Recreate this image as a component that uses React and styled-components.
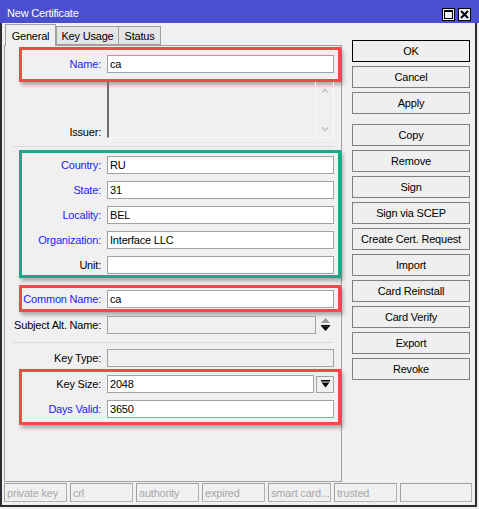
import React from "react";
import styled, { createGlobalStyle } from "styled-components";

const Global = createGlobalStyle`
  html, body { margin: 0; padding: 0; background: #f0f0f0; }
  body { font-family: "Liberation Sans", Arial, sans-serif; font-size: 11px; color: #000; letter-spacing: -0.2px; }
  * { box-sizing: border-box; }
`;

const Window = styled.div`
  width: 479px;
  height: 509px;
  display: flex;
  flex-direction: column;
`;

const TitleBar = styled.div`
  height: 23px;
  background: #4b4fcf;
  color: #fff;
  display: flex;
  align-items: center;
  padding: 0 8px 0 7px;
`;

const Title = styled.div`
  flex: 1;
  font-size: 11px;
  padding-top: 3px;
`;

const TitleButtons = styled.div`
  display: flex;
  gap: 3px;
  align-self: flex-start;
  margin-top: 8px;
`;

const TitleButton = styled.div`
  width: 13px;
  height: 13px;
  border: 1px solid #000;
  background: #f0f0f0;
  display: flex;
  align-items: center;
  justify-content: center;
`;

const Frame = styled.div`
  width: 477px;
  height: 484px;
  border: 2px solid #2e2e2e;
  border-top: none;
  display: flex;
  flex-direction: column;
`;

const Main = styled.div`
  flex: 1;
  display: flex;
`;

const LeftCol = styled.div`
  margin-left: 2px;
  width: 338px;
  display: flex;
  flex-direction: column;
`;

const TabStrip = styled.div`
  height: 21px;
  margin-top: 1px;
  display: flex;
  align-items: flex-end;
  padding-left: 1px;
`;

const Tab = styled.div`
  position: relative;
  z-index: 1;
  width: ${(p) => p.$w}px;
  height: ${(p) => (p.$active ? 22 : 19)}px;
  margin-bottom: ${(p) => (p.$active ? -1 : 0)}px;
  background: ${(p) => (p.$active ? "#f0f0f0" : "#e4e4e4")};
  border: 1px solid #a0a0a0;
  border-bottom: ${(p) => (p.$active ? "none" : "1px solid #a0a0a0")};
  margin-left: ${(p) => p.$ml || 0}px;
  display: flex;
  align-items: center;
  justify-content: center;
  padding-top: ${(p) => (p.$active ? 0 : 1)}px;
  font-size: 11px;
`;

const Panel = styled.div`
  flex: 1;
  border: 1px solid #a0a0a0;
  padding-right: 7px;
  display: flex;
  flex-direction: column;
`;

const Highlight = styled.div`
  margin-top: ${(p) => p.$mt}px;
  margin-left: 14px;
  margin-right: -7px;
  border: 3px solid ${(p) => p.$color};
  box-shadow: 2px 3px 4px rgba(0, 0, 0, 0.3);
  padding: ${(p) => p.$pad};
  padding-right: 4px;
  display: flex;
  flex-direction: column;
  gap: 7px;
`;

const Row = styled.div`
  display: grid;
  grid-template-columns: ${(p) => (p.$boxed ? 79 : 96)}px 1fr;
  column-gap: 6px;
  align-items: center;
  height: ${(p) => p.$h || 18}px;
  margin-top: ${(p) => p.$mt || 0}px;
`;

const Label = styled.div`
  text-align: right;
  white-space: nowrap;
  color: ${(p) => (p.$blue ? "#1c1cff" : "#000")};
  align-self: ${(p) => (p.$bottom ? "end" : "center")};
`;

const Field = styled.input`
  height: 18px;
  width: 100%;
  border: 1px solid #a2a2a2;
  background: ${(p) => (p.disabled ? "#f0f0f0" : "#fff")};
  font: 11px "Liberation Sans", Arial, sans-serif;
  letter-spacing: -0.2px;
  color: #000;
  padding: 0 2px;
  margin: 0;
  outline: none;
`;

const FieldWithButton = styled.div`
  display: flex;
  align-items: center;
  height: 18px;
`;

const SideIcon = styled.div`
  width: 18px;
  flex: none;
  display: flex;
  align-items: center;
  justify-content: center;
`;

const DropButton = styled.div`
  width: 18px;
  height: 17px;
  flex: none;
  margin-left: 2px;
  border: 1px solid #a2a2a2;
  background: #f0f0f0;
  display: flex;
  align-items: center;
  justify-content: center;
`;

const IssuerBox = styled.div`
  height: 56px;
  border-left: 2px solid #707070;
  border-right: 1px solid #fbfbfb;
  border-bottom: 1px solid #fbfbfb;
  display: flex;
  justify-content: flex-end;
`;

const ScrollTrack = styled.div`
  width: 18px;
  border-left: 1px solid #fbfbfb;
  display: flex;
  flex-direction: column;
  justify-content: space-between;
  align-items: center;
  padding: 6px 0 5px;
`;

const Separator = styled.div`
  height: 1px;
  background: #dadada;
  margin-top: ${(p) => p.$mt}px;
  margin-left: 8px;
`;

const RightCol = styled.div`
  margin-left: 10px;
  width: 118px;
  padding-top: 17px;
  display: flex;
  flex-direction: column;
  gap: 4px;
`;

const Button = styled.div`
  height: 22px;
  border: 1px solid ${(p) => (p.$default ? "#000" : "#7e7e7e")};
  background: #efefef;
  display: flex;
  align-items: center;
  justify-content: center;
  margin-top: ${(p) => p.$mt || 0}px;
  font-size: 11px;
  white-space: nowrap;
`;

const StatusBar = styled.div`
  height: 19px;
  margin: 1px 0 3px 2px;
  display: flex;
  gap: 3px;
`;

const StatusCell = styled.div`
  width: ${(p) => p.$w || 63}px;
  border: 1px solid #b0b0b0;
  border-top-color: #a0a0a0;
  border-left-color: #a0a0a0;
  color: #a8a8a8;
  padding-left: 2px;
  display: flex;
  align-items: center;
  white-space: nowrap;
  overflow: hidden;
`;

const MaxIcon = () => (
  <svg width="9" height="9" viewBox="0 0 9 9">
    <rect x="0.5" y="0.5" width="8" height="8" fill="none" stroke="#000" />
    <rect x="0" y="0" width="9" height="2" fill="#000" />
  </svg>
);

const CloseIcon = () => (
  <svg width="9" height="9" viewBox="0 0 9 9">
    <path d="M1 1 L8 8 M8 1 L1 8" stroke="#000" strokeWidth="2" />
  </svg>
);

const Chevron = ({ up }) => (
  <svg width="8" height="5" viewBox="0 0 8 5">
    <path
      d={up ? "M1 4.5 L4 1.5 L7 4.5" : "M1 0.5 L4 3.5 L7 0.5"}
      fill="none"
      stroke="#c4c4c4"
      strokeWidth="1.6"
    />
  </svg>
);

const UpDownIcon = () => (
  <svg width="11" height="14" viewBox="0 0 11 14">
    <polygon points="5.5,0 10,5 1,5" fill="#9a9a9a" />
    <rect x="1" y="7" width="9" height="1.5" fill="#000" />
    <polygon points="1.5,8.5 9.5,8.5 5.5,13" fill="#000" />
  </svg>
);

const DropIcon = () => (
  <svg width="9" height="8" viewBox="0 0 9 8">
    <rect x="0" y="0" width="9" height="1.5" fill="#000" />
    <polygon points="0.5,2.5 8.5,2.5 4.5,7.5" fill="#000" />
  </svg>
);

const buttonsTop = ["OK", "Cancel", "Apply"];
const buttonsBottom = [
  "Copy",
  "Remove",
  "Sign",
  "Sign via SCEP",
  "Create Cert. Request",
  "Import",
  "Card Reinstall",
  "Card Verify",
  "Export",
  "Revoke",
];

const subjectRows = [
  { label: "Country", value: "RU", blue: true },
  { label: "State", value: "31", blue: true },
  { label: "Locality", value: "BEL", blue: true },
  { label: "Organization", value: "Interface LLC", blue: true },
  { label: "Unit", value: "", blue: false },
];

const statusCells = ["private key", "crl", "authority", "expired", "smart card...", "trusted"];

export default function App() {
  return (
    <>
      <Global />
      <Window>
        <TitleBar>
          <Title>New Certificate</Title>
          <TitleButtons>
            <TitleButton>
              <MaxIcon />
            </TitleButton>
            <TitleButton>
              <CloseIcon />
            </TitleButton>
          </TitleButtons>
        </TitleBar>
        <Frame>
          <Main>
            <LeftCol>
              <TabStrip>
                <Tab $active $w={51}>General</Tab>
                <Tab $w={63}>Key Usage</Tab>
                <Tab $w={43} $ml={-1}>Status</Tab>
              </TabStrip>
              <Panel>
                <Highlight $color="#f24a4a" $mt={1} $pad="5px 0 6px 0">
                  <Row $boxed>
                    <Label $blue>Name:</Label>
                    <Field readOnly defaultValue="ca" />
                  </Row>
                </Highlight>
                <Row $h={56}>
                  <Label $bottom>Issuer:</Label>
                  <IssuerBox>
                    <ScrollTrack>
                      <Chevron up />
                      <Chevron />
                    </ScrollTrack>
                  </IssuerBox>
                </Row>
                <Separator $mt={8} />
                <Highlight $color="#1aa98b" $mt={3} $pad="3px 0 1px 0">
                  {subjectRows.map((r) => (
                    <Row $boxed key={r.label}>
                      <Label $blue={r.blue}>{r.label}:</Label>
                      <Field readOnly defaultValue={r.value} />
                    </Row>
                  ))}
                </Highlight>
                <Highlight $color="#f24a4a" $mt={7} $pad="2px 0 1px 0">
                  <Row $boxed>
                    <Label $blue>Common Name:</Label>
                    <Field readOnly defaultValue="ca" />
                  </Row>
                </Highlight>
                <Row $mt={4}>
                  <Label>Subject Alt. Name:</Label>
                  <FieldWithButton>
                    <Field disabled defaultValue="" />
                    <SideIcon>
                      <UpDownIcon />
                    </SideIcon>
                  </FieldWithButton>
                </Row>
                <Separator $mt={8} />
                <Row $mt={6}>
                  <Label>Key Type:</Label>
                  <Field disabled defaultValue="" />
                </Row>
                <Highlight $color="#f24a4a" $mt={2} $pad="3px 0 4px 0">
                  <Row $boxed>
                    <Label>Key Size:</Label>
                    <FieldWithButton>
                      <Field readOnly defaultValue="2048" />
                      <DropButton>
                        <DropIcon />
                      </DropButton>
                    </FieldWithButton>
                  </Row>
                  <Row $boxed>
                    <Label $blue>Days Valid:</Label>
                    <Field readOnly defaultValue="3650" />
                  </Row>
                </Highlight>
              </Panel>
            </LeftCol>
            <RightCol>
              {buttonsTop.map((b, i) => (
                <Button key={b} $default={i === 0}>
                  {b}
                </Button>
              ))}
              {buttonsBottom.map((b, i) => (
                <Button key={b} $mt={i === 0 ? 6 : 0}>
                  {b}
                </Button>
              ))}
            </RightCol>
          </Main>
          <StatusBar>
            {statusCells.map((s) => (
              <StatusCell key={s}>{s}</StatusCell>
            ))}
            <StatusCell $w={72} />
          </StatusBar>
        </Frame>
      </Window>
    </>
  );
}
